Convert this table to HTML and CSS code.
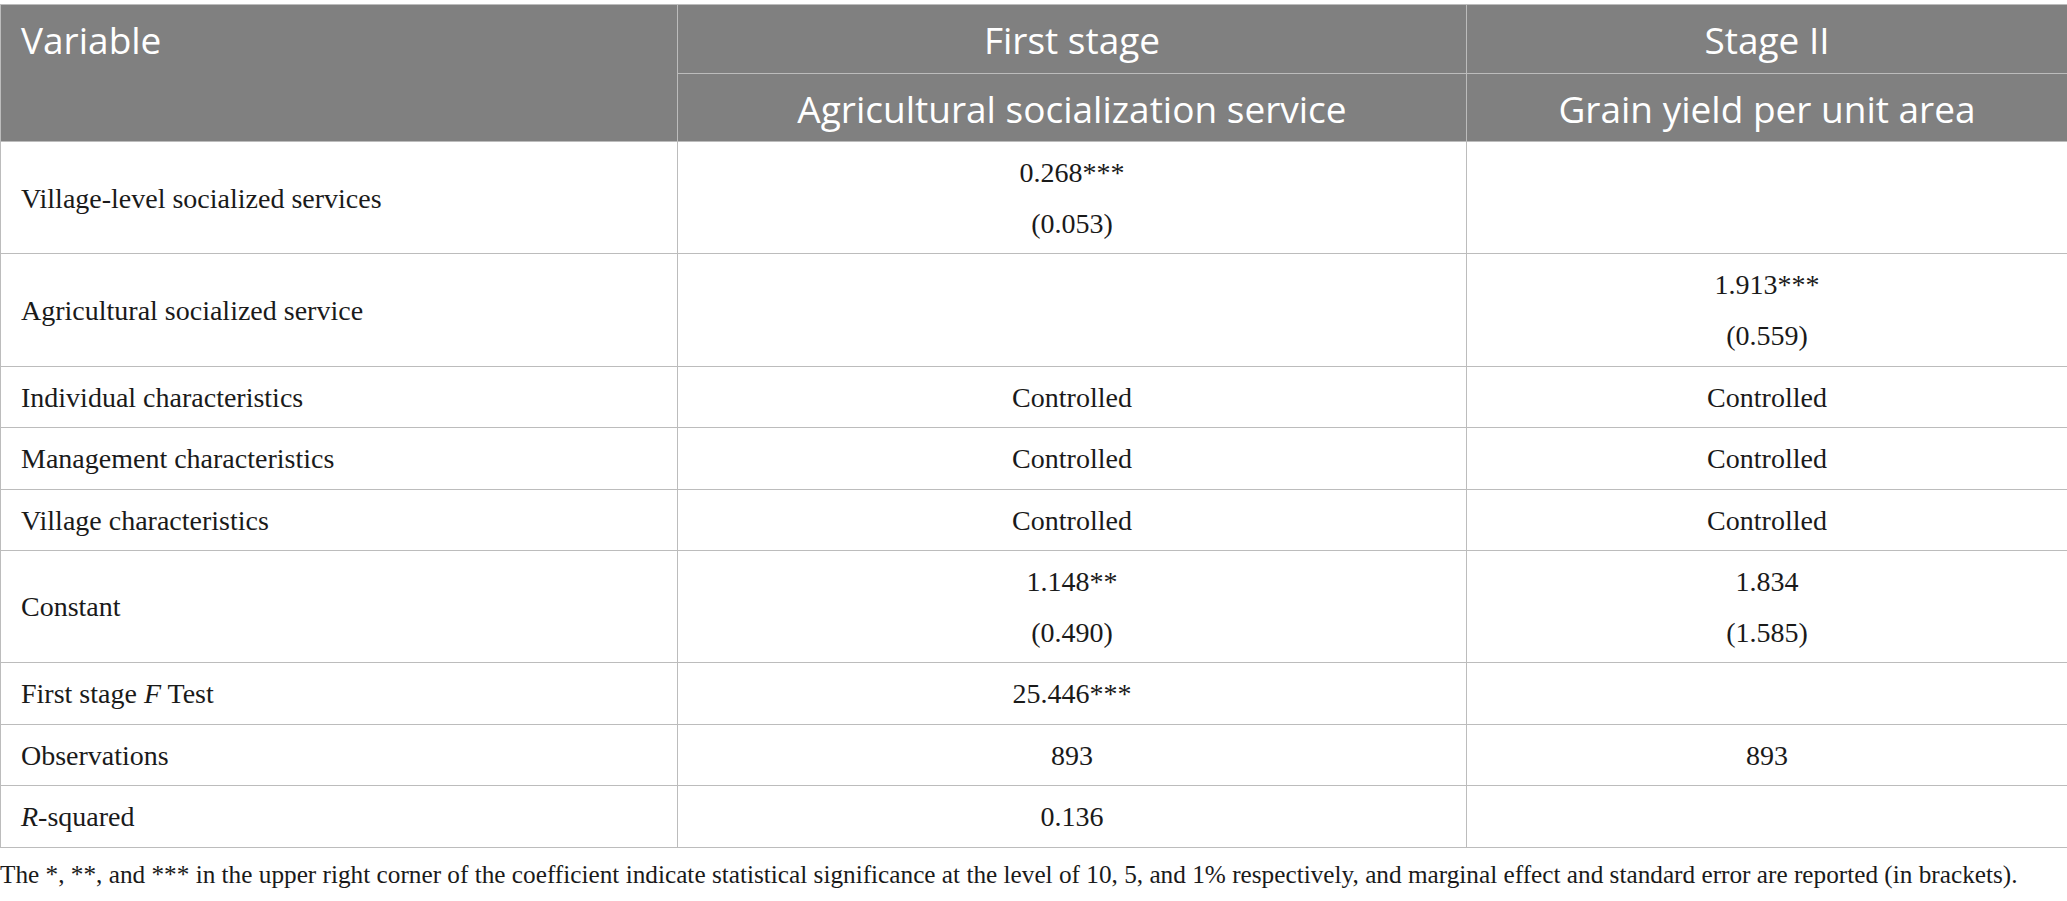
FILE: index.html
```html
<!DOCTYPE html>
<html lang="en">
<head>
    <meta charset="UTF-8">
    <meta name="viewport" content="width=device-width, initial-scale=1.0">
    <title>IV estimation results</title>
    <link rel="stylesheet" href="styles.css">
</head>
<body>
    <div class="table-wrap">
        <table class="results">
            <colgroup>
                <col class="col-var">
                <col class="col-first">
                <col class="col-second">
            </colgroup>
            <thead>
                <tr>
                    <th rowspan="2" class="left">Variable</th>
                    <th>First stage</th>
                    <th>Stage II</th>
                </tr>
                <tr>
                    <th>Agricultural socialization service</th>
                    <th>Grain yield per unit area</th>
                </tr>
            </thead>
            <tbody>
                <tr>
                    <td>Village-level socialized services</td>
                    <td class="num">0.268***<br>(0.053)</td>
                    <td class="num"></td>
                </tr>
                <tr>
                    <td>Agricultural socialized service</td>
                    <td class="num"></td>
                    <td class="num">1.913***<br>(0.559)</td>
                </tr>
                <tr>
                    <td>Individual characteristics</td>
                    <td class="num">Controlled</td>
                    <td class="num">Controlled</td>
                </tr>
                <tr>
                    <td>Management characteristics</td>
                    <td class="num">Controlled</td>
                    <td class="num">Controlled</td>
                </tr>
                <tr>
                    <td>Village characteristics</td>
                    <td class="num">Controlled</td>
                    <td class="num">Controlled</td>
                </tr>
                <tr>
                    <td>Constant</td>
                    <td class="num">1.148**<br>(0.490)</td>
                    <td class="num">1.834<br>(1.585)</td>
                </tr>
                <tr>
                    <td>First stage <i>F</i> Test</td>
                    <td class="num">25.446***</td>
                    <td class="num"></td>
                </tr>
                <tr>
                    <td>Observations</td>
                    <td class="num">893</td>
                    <td class="num">893</td>
                </tr>
                <tr>
                    <td><i>R</i>-squared</td>
                    <td class="num">0.136</td>
                    <td class="num"></td>
                </tr>
            </tbody>
        </table>
        <p class="footnote">The *, **, and *** in the upper right corner of the coefficient indicate statistical significance at the level of 10, 5, and 1% respectively, and marginal effect and standard error are reported (in brackets).</p>
    </div>
</body>
</html>
```

FILE: styles.css
```css
body {
    margin: 0;
    padding: 0;
    background-color: #fff;
    color: #1a1a1a;
    font-family: 'Liberation Serif', 'Times New Roman', serif;
}
.table-wrap {
    padding-top: 4px;
}
.results {
    width: 2067px;
    border-collapse: collapse;
    table-layout: fixed;
}
.col-var {
    width: 677px;
}
.col-first {
    width: 789px;
}
.col-second {
    width: 601px;
}
.results th,
.results td {
    border: 1px solid #bcbcbc;
}
/* Header cells */
.results th {
    background-color: #808080;
    color: #fff;
    font-family: 'Open Sans', 'Noto Sans', sans-serif;
    font-weight: 400;
    font-size: 37px;
    line-height: 49px;
    padding: 10px 20px 8.5px;
    text-align: center;
    vertical-align: top;
}
.results th.left {
    text-align: left;
}
/* Body cells */
.results td {
    font-size: 28px;
    line-height: 51px;
    padding: 5px 20px 4.4px;
    text-align: left;
    vertical-align: middle;
}
.results td.num {
    text-align: center;
}
.footnote {
    margin: 12px 0 0;
    font-size: 25.25px;
    line-height: 29px;
}
```
